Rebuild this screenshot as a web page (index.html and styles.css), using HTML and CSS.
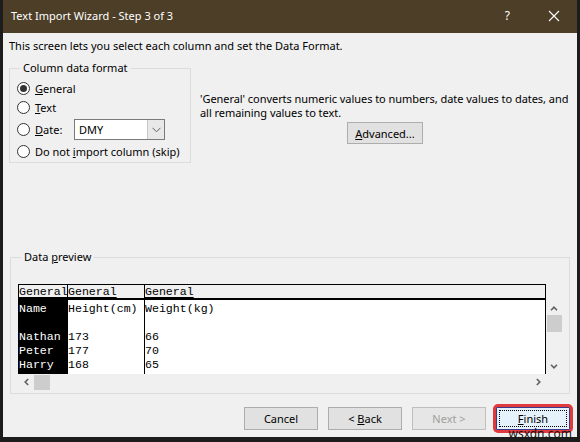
FILE: index.html
```html
<!DOCTYPE html>
<html>
<head>
<meta charset="utf-8">
<link rel="stylesheet" href="styles.css">
</head>
<body>
<div class="window">
  <div class="titlebar">
    <span class="title">Text Import Wizard - Step 3 of 3</span>
    <span class="tb-btns">
      <span class="help">?</span>
      <svg class="close" width="12" height="12" viewBox="0 0 12 12"><path d="M1 1L11 11M11 1L1 11" stroke="#fff" stroke-width="1.1" fill="none"/></svg>
    </span>
  </div>
  <div class="content">
    <p class="intro">This screen lets you select each column and set the Data Format.</p>
    <div class="top-row">
      <fieldset class="group fmt">
        <legend>Column data format</legend>
        <div class="radio r1"><span class="circle checked"></span><span><u>G</u>eneral</span></div>
        <div class="radio r2"><span class="circle"></span><span><u>T</u>ext</span></div>
        <div class="radio r3"><span class="circle"></span><span class="date-lbl"><u>D</u>ate:</span>
          <div class="select"><span class="sel-val">DMY</span><span class="sel-arrow"><svg width="9" height="6" viewBox="0 0 9 6"><path d="M0.5 0.8L4.5 4.8L8.5 0.8" stroke="#606060" fill="none" stroke-width="1"/></svg></span></div>
        </div>
        <div class="radio r4"><span class="circle"></span><span>Do not <u>i</u>mport column (skip)</span></div>
      </fieldset>
      <div class="desc">
        <p>'General' converts numeric values to numbers, date values to dates, and<br>all remaining values to text.</p>
        <button class="btn adv"><span><u>A</u>dvanced...</span></button>
      </div>
    </div>
    <fieldset class="group preview">
      <legend>Data <u>p</u>review</legend>
      <div class="pv-grid">
        <div class="table">
          <div class="col c1">
            <div class="hd"><span>General</span></div>
            <div class="bd">
              <div>Name</div><div>&nbsp;</div><div>Nathan</div><div>Peter</div><div>Harry</div>
            </div>
          </div>
          <div class="col c2">
            <div class="hd"><span>General</span></div>
            <div class="bd">
              <div>Height(cm)</div><div>&nbsp;</div><div>173</div><div>177</div><div>168</div>
            </div>
          </div>
          <div class="col c3">
            <div class="hd"><span>General</span></div>
            <div class="bd">
              <div>Weight(kg)</div><div>&nbsp;</div><div>66</div><div>70</div><div>65</div>
            </div>
          </div>
        </div>
        <div class="vscroll">
          <span class="arr"><svg width="8" height="5" viewBox="0 0 8 5"><path d="M1 4.2L4 1.2L7 4.2" stroke="#606060" stroke-width="1.6" fill="none"/></svg></span>
          <span class="thumb-v"></span>
          <span class="vspace"></span>
          <span class="arr"><svg width="8" height="5" viewBox="0 0 8 5"><path d="M1 0.8L4 3.8L7 0.8" stroke="#606060" stroke-width="1.6" fill="none"/></svg></span>
        </div>
        <div class="hscroll">
          <span class="arr"><svg width="5" height="8" viewBox="0 0 5 8"><path d="M4.2 1L1.2 4L4.2 7" stroke="#606060" stroke-width="1.6" fill="none"/></svg></span>
          <span class="thumb-h"></span>
          <span class="hspace"></span>
          <span class="arr"><svg width="5" height="8" viewBox="0 0 5 8"><path d="M0.8 1L3.8 4L0.8 7" stroke="#606060" stroke-width="1.6" fill="none"/></svg></span>
        </div>
      </div>
    </fieldset>
    <div class="buttons">
      <button class="btn"><span>Cancel</span></button>
      <button class="btn"><span>&lt; <u>B</u>ack</span></button>
      <button class="btn disabled"><span>Next &gt;</span></button>
      <button class="btn finish"><span class="focus"><span><u>F</u>inish</span></span></button>
    </div>
  </div>
  <div class="watermark">wsxdn.com</div>
</div>
</body>
</html>
```
FILE: styles.css
```css
* { box-sizing: border-box; }
html, body { margin: 0; padding: 0; }
body {
  background: #1c1c1c;
  width: 580px;
  height: 442px;
  overflow: hidden;
  font-family: "Noto Sans", "Open Sans", sans-serif;
  font-size: 11px;
  color: #000;
}
.window {
  position: relative;
  margin-left: 3px;
  width: 574px;
  height: 437px;
  background: #f0f0f0;
  display: flex;
  flex-direction: column;
}
.titlebar {
  height: 33px;
  background: #4d3e27;
  color: #fff;
  display: flex;
  align-items: center;
  padding: 0 0 2px 8px;
}
.title { flex: 1; font-size: 11px; }
.tb-btns { display: flex; align-items: center; }
.help { font-size: 12px; margin-right: 38px; color: #fff; }
.close { margin-right: 17px; }
.content {
  flex: 1;
  padding: 5px 7px 5px 6px;
  display: flex;
  flex-direction: column;
}
.intro { margin: 0; line-height: 16px; height: 16px; }
.top-row { display: flex; margin-top: 7px; }
.group {
  border: 1px solid #dcdcdc;
  margin: 0;
  padding: 0;
  min-width: 0;
}
.group legend {
  padding: 0 3px;
  margin-left: 3px;
  line-height: 14px;
}
.fmt {
  width: 182px;
  height: 102px;
  padding: 0 0 0 7px;
  flex: none;
}
.radio {
  display: flex;
  align-items: center;
  height: 17px;
  white-space: nowrap;
}
.r1 { margin-top: 5px; }
.r2 { margin-top: 2px; }
.r3 { margin-top: 3px; height: 21px; }
.r4 { margin-top: 3px; }
.circle {
  width: 13px;
  height: 13px;
  border: 1px solid #333;
  border-radius: 50%;
  background: #fff;
  margin-right: 5px;
  display: flex;
  align-items: center;
  justify-content: center;
  flex: none;
}
.circle.checked::after {
  content: "";
  width: 7px;
  height: 7px;
  border-radius: 50%;
  background: #333;
}
.date-lbl { width: 39px; }
.select {
  width: 91px;
  height: 21px;
  border: 1px solid #7a7a7a;
  background: #fff;
  display: flex;
}
.sel-val { flex: 1; padding-left: 4px; line-height: 19px; }
.sel-arrow {
  width: 17px;
  background: #e8e8e8;
  border-left: 1px solid #c8c8c8;
  display: flex;
  align-items: center;
  justify-content: center;
}
.desc {
  margin-left: 9px;
  margin-top: 31px;
  flex: 1;
  min-width: 0;
  display: flex;
  flex-direction: column;
  align-items: center;
}
.desc p { margin: 0; line-height: 14px; align-self: flex-start; white-space: nowrap; letter-spacing: -0.05px; }
.btn {
  font-family: inherit;
  font-size: 11px;
  color: #000;
  background: #e1e1e1;
  border: 1px solid #adadad;
  padding: 0;
  margin: 0;
  width: 74px;
  height: 23px;
  display: flex;
  align-items: center;
  justify-content: center;
}
.adv { width: 76px; height: 22px; margin-top: 2px; margin-left: 0; }
.preview {
  margin-top: 87px;
  margin-left: 1px;
  width: 560px;
  padding: 0 0 3px 7px;
}
.pv-grid {
  display: grid;
  grid-template-columns: 528px 16px;
  grid-template-rows: 90px 16px;
  margin-top: 20px;
}
.table {
  border: 1px solid #000;
  border-bottom: none;
  display: flex;
  font-family: "Liberation Mono", "Courier New", monospace;
  font-size: 11.6px;
  background: #fff;
  overflow: hidden;
}
.col { display: flex; flex-direction: column; }
.col + .col { border-left: 1px solid #000; }
.c1 { width: 48px; }
.c2 { width: 77px; }
.c3 { flex: 1; }
.hd {
  height: 15px;
  line-height: 13px;
  background: #f0f0f0;
  border-bottom: 2px solid #000;
  white-space: nowrap;
}
.hd span { text-decoration: underline; text-underline-offset: 2px; }
.bd { flex: 1; padding-top: 2px; }
.bd div { height: 14px; line-height: 14px; white-space: nowrap; }
.c1 .bd { background: #000; color: #fff; }
.vscroll {
  display: flex;
  flex-direction: column;
  align-items: center;
  padding-top: 16px;
}
.vscroll .arr {
  width: 16px;
  height: 16px;
  display: flex;
  align-items: center;
  justify-content: center;
  flex: none;
}
.thumb-v { width: 15px; height: 17px; background: #cdcdcd; margin-top: -1px; }
.vspace { flex: 1; }
.hscroll { display: flex; align-items: center; }
.hscroll .arr {
  width: 16px;
  height: 16px;
  display: flex;
  align-items: center;
  justify-content: center;
  flex: none;
}
.thumb-h { width: 16px; height: 15px; background: #cdcdcd; }
.hspace { flex: 1; }
.buttons {
  display: flex;
  justify-content: flex-end;
  gap: 10px;
  margin-top: 13px;
}
.btn.disabled { color: #a0a0a0; border-color: #bfbfbf; background: #e6e6e6; }
.btn.finish {
  position: relative;
  border-color: #3a3a8a;
  background: #e5f1fb;
}
.btn.finish::before {
  content: "";
  position: absolute;
  left: -4px;
  top: -4px;
  right: -4px;
  bottom: -4px;
  border: 3px solid #e0393e;
  border-radius: 5px;
}
.focus {
  position: absolute;
  left: 2px;
  top: 2px;
  right: 2px;
  bottom: 2px;
  border: 1px dotted #000;
  display: flex;
  align-items: center;
  justify-content: center;
}
.watermark {
  position: absolute;
  right: 5px;
  bottom: -3px;
  font-size: 12px;
  color: #111;
  line-height: 12px;
}
```
